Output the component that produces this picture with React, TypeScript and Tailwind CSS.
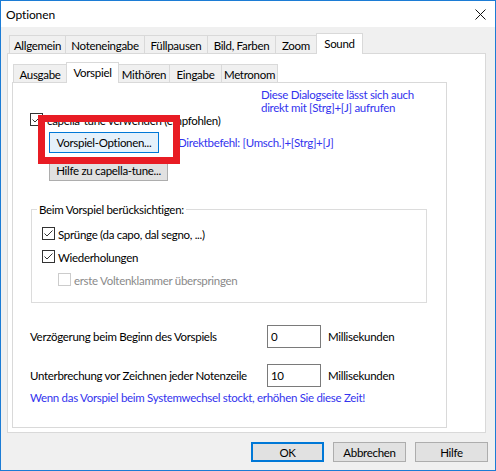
import React from "react";

type TabProps = { label: string; w: string; active?: boolean };

function Tab({ label, w, active }: TabProps) {
  if (active) {
    return (
      <div
        className={`${w} h-[21px] -mb-[1px] -ml-[1px] first:ml-0 relative z-10 flex justify-center items-start pt-[3px] bg-white border-t border-l border-r border-[#d9d9d9]`}
      >
        {label}
      </div>
    );
  }
  return (
    <div
      className={`${w} h-[18px] -ml-[1px] first:ml-0 flex justify-center items-start pt-[3px] bg-[#f0f0f0] border-t border-l border-r border-[#d9d9d9]`}
    >
      {label}
    </div>
  );
}

function Check({ checked, disabled }: { checked?: boolean; disabled?: boolean }) {
  return (
    <span
      className={`w-[13px] h-[13px] shrink-0 border bg-white flex items-center justify-center ${
        disabled ? "border-[#cccccc]" : "border-[#333333]"
      }`}
    >
      {checked && (
        <svg width="11" height="11" viewBox="0 0 11 11">
          <path d="M1.5 5.5 L4 8 L9.5 2.5" stroke="#333333" strokeWidth="1" fill="none" />
        </svg>
      )}
    </span>
  );
}

function Button({ label, w, h, primary }: { label: string; w: string; h: string; primary?: boolean }) {
  return (
    <div
      className={`${w} ${h} shrink-0 flex items-center justify-center ${
        primary ? "border-2 border-[#0078d7] bg-[#e1e1e1]" : "border border-[#adadad] bg-[#e1e1e1]"
      }`}
    >
      {label}
    </div>
  );
}

export default function App() {
  return (
    <div className="w-[496px] h-[471px] bg-[#f0f0f0] border border-[#1c7cd5] flex flex-col font-['Lato',sans-serif] text-[11.5px] tracking-[-0.3px] leading-[13px] text-black select-none">
      {/* Title bar */}
      <div className="h-[26px] shrink-0 bg-white flex items-center justify-between pl-[5px] pr-[9px]">
        <span className="text-[12px] tracking-[-0.1px]">Optionen</span>
        <svg width="11" height="11" viewBox="0 0 11 11">
          <path d="M0.5 0.5 L10.5 10.5 M10.5 0.5 L0.5 10.5" stroke="#111" strokeWidth="1" fill="none" />
        </svg>
      </div>

      {/* Outer tabs */}
      <div className="h-[26px] shrink-0 pt-[6px] pl-[8px] flex items-end">
        <Tab label="Allgemein" w="w-[57px]" />
        <Tab label="Noteneingabe" w="w-[80px]" />
        <Tab label="Füllpausen" w="w-[64px]" />
        <Tab label="Bild, Farben" w="w-[69px]" />
        <Tab label="Zoom" w="w-[42px]" />
        <Tab label="Sound" w="w-[47px]" active />
      </div>

      {/* Outer panel */}
      <div className="ml-[6px] w-[479px] h-[380px] shrink-0 bg-white border border-[#d9d9d9] flex flex-col">
        {/* Inner tabs */}
        <div className="h-[28px] shrink-0 pt-[8px] pl-[5px] flex items-end">
          <Tab label="Ausgabe" w="w-[54px]" />
          <Tab label="Vorspiel" w="w-[53px]" active />
          <Tab label="Mithören" w="w-[52px]" />
          <Tab label="Eingabe" w="w-[53px]" />
          <Tab label="Metronom" w="w-[57px]" />
        </div>

        {/* Inner panel */}
        <div className="ml-[4px] w-[435px] h-[346px] shrink-0 bg-white border border-[#d9d9d9] relative flex flex-col">
          <div className="pt-[5px] pl-[248px] text-[#3333ee]">
            <div>Diese Dialogseite lässt sich auch</div>
            <div>direkt mit [Strg]+[J] aufrufen</div>
          </div>

          <div className="-mt-[1px] h-[13px] pl-[17px] flex items-center gap-[4px]">
            <Check checked />
            <span className="pt-[1px]">capella-tune verwenden (empfohlen)</span>
          </div>

          <div className="mt-[6px] pl-[36px] flex items-center gap-[19px]">
            <div className="w-[110px] h-[21px] shrink-0 flex items-center justify-center border border-[#0078d7] bg-[#e5f1fb]">
              Vorspiel-Optionen...
            </div>
            <span className="text-[#3333ee]">Direktbefehl: [Umsch.]+[Strg]+[J]</span>
          </div>

          <div className="mt-[6px] pl-[36px] flex">
            <Button label="Hilfe zu capella-tune..." w="w-[119px]" h="h-[22px]" />
          </div>

          {/* Group box */}
          <div className="mt-[28px] ml-[18px] w-[396px] h-[94px] shrink-0 border border-[#dcdcdc] relative flex flex-col pl-[10px] pt-[17px]">
            <span className="absolute left-[5px] top-[-7px] bg-white px-[2px]">Beim Vorspiel berücksichtigen:</span>
            <div className="h-[13px] flex items-center gap-[3px]">
              <Check checked />
              <span className="pt-[1px]">Sprünge (da capo, dal segno, ...)</span>
            </div>
            <div className="mt-[10px] h-[13px] flex items-center gap-[3px]">
              <Check checked />
              <span className="pt-[1px]">Wiederholungen</span>
            </div>
            <div className="mt-[10px] ml-[16px] h-[13px] flex items-center gap-[3px]">
              <Check disabled />
              <span className="pt-[1px] text-[#8a8a8a]">erste Voltenklammer überspringen</span>
            </div>
          </div>

          <div className="mt-[22px] pl-[17px] h-[23px] flex items-center">
            <span className="w-[237px] shrink-0 whitespace-nowrap">Verzögerung beim Beginn des Vorspiels</span>
            <div className="w-[54px] h-[23px] shrink-0 border border-[#7a7a7a] flex items-center pl-[3px]">0</div>
            <span className="ml-[7px]">Millisekunden</span>
          </div>

          <div className="mt-[16px] pl-[17px] h-[23px] flex items-center">
            <span className="w-[237px] shrink-0 whitespace-nowrap">Unterbrechung vor Zeichnen jeder Notenzeile</span>
            <div className="w-[54px] h-[23px] shrink-0 border border-[#7a7a7a] flex items-center pl-[3px]">10</div>
            <span className="ml-[7px]">Millisekunden</span>
          </div>

          <div className="mt-[4px] pl-[17px] text-[#3333ee] whitespace-nowrap">
            Wenn das Vorspiel beim Systemwechsel stockt, erhöhen Sie diese Zeit!
          </div>

          {/* Red highlight drawn over the dialog */}
          <div className="absolute left-[25px] top-[32px] w-[142px] h-[49px] border-[7px] border-[#e81c24]" />
        </div>
      </div>

      {/* Dialog buttons */}
      <div className="mt-[9px] h-[20px] shrink-0 flex justify-end gap-[9px] pr-[7px]">
        <Button label="OK" w="w-[73px]" h="h-[20px]" primary />
        <Button label="Abbrechen" w="w-[73px]" h="h-[20px]" />
        <Button label="Hilfe" w="w-[73px]" h="h-[20px]" />
      </div>
    </div>
  );
}
